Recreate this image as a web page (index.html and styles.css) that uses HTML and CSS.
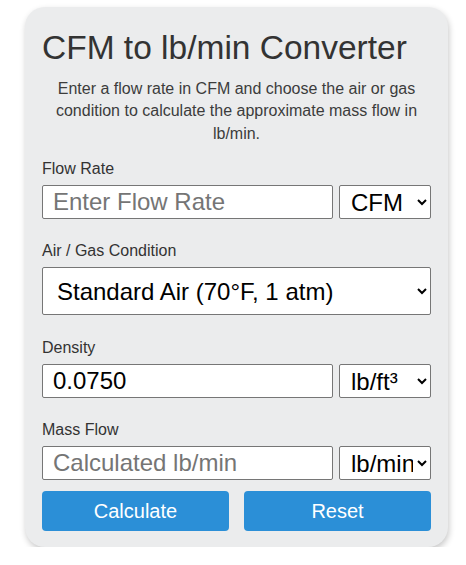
FILE: index.html
```html
<!DOCTYPE html>
<html>
<head>
<meta charset="utf-8">
<link rel="stylesheet" href="styles.css">
</head>
<body>
<div class="card">
  <h1 class="title">CFM to lb/min Converter</h1>
  <p class="intro">Enter a flow rate in CFM and choose the air or gas condition to calculate the approximate mass flow in lb/min.</p>

  <div class="group g1">
    <label class="label">Flow Rate</label>
    <div class="row">
      <input class="field" type="text" placeholder="Enter Flow Rate">
      <select class="unit"><option>CFM</option></select>
    </div>
  </div>

  <div class="group g2">
    <label class="label">Air / Gas Condition</label>
    <select class="wide"><option>Standard Air (70°F, 1 atm)</option></select>
  </div>

  <div class="group g3">
    <label class="label">Density</label>
    <div class="row">
      <input class="field" type="text" value="0.0750">
      <select class="unit"><option>lb/ft³</option></select>
    </div>
  </div>

  <div class="group g4">
    <label class="label">Mass Flow</label>
    <div class="row">
      <input class="field" type="text" placeholder="Calculated lb/min">
      <select class="unit"><option>lb/min</option></select>
    </div>
  </div>

  <div class="buttons">
    <button class="btn">Calculate</button>
    <button class="btn">Reset</button>
  </div>
</div>
</body>
</html>
```

FILE: styles.css
```css
html, body {
  margin: 0;
  padding: 0;
  background: #ffffff;
}
body {
  font-family: "Liberation Sans", Arial, sans-serif;
  padding-top: 7px;
}
.card {
  margin-left: 25px;
  width: 423px;
  height: 540px;
  box-sizing: border-box;
  padding: 22px 17px 16px 17px;
  background: #ebeced;
  border-radius: 20px;
  box-shadow: 1px 3px 6px rgba(0, 0, 0, 0.22);
}
.title {
  margin: 0;
  font-size: 33.5px;
  font-weight: normal;
  color: #333333;
  line-height: 38px;
}
.intro {
  margin: 11px 0 15px 0;
  font-size: 16px;
  line-height: 22.4px;
  color: #3c3c3c;
  text-align: center;
}
.group.g1 {
  margin-bottom: 23px;
}
.group.g2 {
  margin-bottom: 24px;
}
.group.g3 {
  margin-bottom: 23px;
}
.group.g4 {
  margin-bottom: 11px;
}
.label {
  display: block;
  font-size: 16px;
  line-height: 18px;
  color: #333333;
  margin-bottom: 7px;
}
.row {
  display: flex;
  gap: 6px;
}
.field {
  flex: 1;
  min-width: 0;
  height: 34px;
  box-sizing: border-box;
  margin: 0;
  padding: 0 10px;
  border: 1px solid #767676;
  border-radius: 2px;
  background: #ffffff;
  font-family: "Liberation Sans", Arial, sans-serif;
  font-size: 24px;
  color: #000000;
}
.field::placeholder {
  color: #757575;
}
.unit {
  width: 92px;
  height: 34px;
  box-sizing: border-box;
  margin: 0;
  padding: 0 1px 0 7px;
  border: 1px solid #767676;
  border-radius: 2px;
  background: #ffffff;
  font-family: "Liberation Sans", Arial, sans-serif;
  font-size: 24px;
  color: #000000;
}
.wide {
  display: block;
  width: 100%;
  height: 48px;
  box-sizing: border-box;
  margin: 0;
  padding: 0 4px 0 10px;
  border: 1px solid #767676;
  border-radius: 2px;
  background: #ffffff;
  font-family: "Liberation Sans", Arial, sans-serif;
  font-size: 24px;
  color: #000000;
}
.buttons {
  display: flex;
  gap: 15px;
}
.btn {
  flex: 1;
  height: 40px;
  margin: 0;
  border: none;
  border-radius: 4px;
  background: #2b8fd7;
  color: #ffffff;
  font-family: "Liberation Sans", Arial, sans-serif;
  font-size: 20px;
}
```
